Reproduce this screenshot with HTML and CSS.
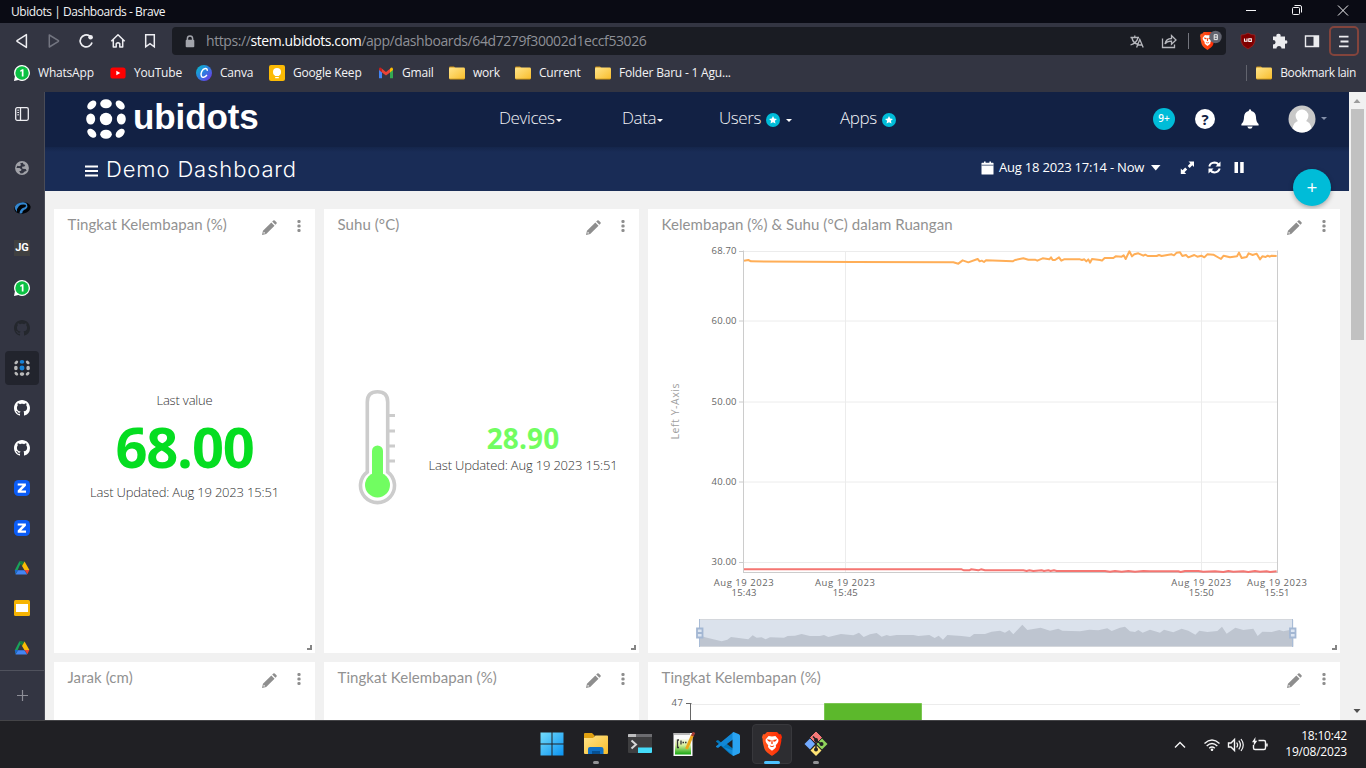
FILE: index.html
```html
<!DOCTYPE html>
<html lang="id">
<head>
<meta charset="utf-8">
<title>Ubidots | Dashboards</title>
<link rel="stylesheet" href="styles.css">
</head>
<body>
<svg class="defs" width="0" height="0">
  <defs>
    <linearGradient id="folderFill" x1="0" y1="0" x2="1" y2="1"><stop offset="0" stop-color="#ffe48a"/><stop offset="1" stop-color="#f8bd2b"/></linearGradient>
    <linearGradient id="canvaFill" x1="0" y1="0" x2="1" y2="1"><stop offset="0" stop-color="#00c4cc"/><stop offset=".5" stop-color="#2f7be0"/><stop offset="1" stop-color="#7d2ae8"/></linearGradient>
    <linearGradient id="winFill" x1="0" y1="0" x2="1" y2="1"><stop offset="0" stop-color="#74dcfb"/><stop offset="1" stop-color="#0a93f2"/></linearGradient>
    <linearGradient id="braveFill" x1="0" y1="0" x2="1" y2="0"><stop offset="0" stop-color="#ff5a1f"/><stop offset="1" stop-color="#ff2600"/></linearGradient>
    <linearGradient id="nppFill" x1="0" y1="0" x2="0" y2="1"><stop offset="0" stop-color="#f4f7ea"/><stop offset=".4" stop-color="#d8ef9c"/><stop offset="1" stop-color="#14a50f"/></linearGradient>
    <symbol id="folder" viewBox="0 0 16 14"><path d="M0 2Q0 .6 1.2 .6H5L6.6 2.2H0Z" fill="#c98e14"/><path d="M0 2.6Q0 1.6 1 1.6H14.6Q16 1.6 16 3V12Q16 13.2 14.8 13.2H1.2Q0 13.2 0 12Z" fill="url(#folderFill)"/><path d="M0 12.3Q.1 13.4 1.2 13.4H14.8Q15.9 13.4 16 12.3Q15.6 12.8 14.8 12.8H1.2Q.4 12.8 0 12.3Z" fill="#a8780f"/></symbol>
    <symbol id="whatsapp" viewBox="0 0 16 16"><path d="M8 .1A7.9 7.9 0 1 1 4.4 15L0 16 .9 11.6A7.9 7.9 0 0 1 8 .1Z" fill="#fff"/><circle cx="8" cy="8" r="6.7" fill="#0cc143"/><path d="M8.2 4.2H9.5V11.6H7.8V6.2L6.2 6.8V5.4Z" fill="#fff"/></symbol>
    <symbol id="github" viewBox="0 0 16 16"><path d="M8 0C3.58 0 0 3.58 0 8c0 3.54 2.29 6.53 5.47 7.59.4.07.55-.17.55-.38 0-.19-.01-.82-.01-1.49-2.01.37-2.53-.49-2.69-.94-.09-.23-.48-.94-.82-1.13-.28-.15-.68-.52-.01-.53.63-.01 1.08.58 1.23.82.72 1.21 1.87.87 2.33.66.07-.52.28-.87.51-1.07-1.78-.2-3.64-.89-3.64-3.95 0-.87.31-1.59.82-2.15-.08-.2-.36-1.02.08-2.12 0 0 .67-.21 2.2.82.64-.18 1.32-.27 2-.27s1.36.09 2 .27c1.53-1.04 2.2-.82 2.2-.82.44 1.1.16 1.92.08 2.12.51.56.82 1.27.82 2.15 0 3.07-1.87 3.75-3.65 3.95.29.25.54.73.54 1.48 0 1.07-.01 1.93-.01 2.2 0 .21.15.46.55.38A8.01 8.01 0 0 0 16 8c0-4.42-3.58-8-8-8Z" fill="currentColor"/></symbol>
    <symbol id="zoomz" viewBox="0 0 16 16"><rect width="16" height="16" rx="4.6" fill="#0b5cf6"/><path d="M3.7 3.4H11.9V5.7L7.2 10.5H12V12.7H3.7V10.4L8.5 5.6H3.7Z" fill="#fff"/></symbol>
    <symbol id="drive" viewBox="0 0 16 14"><path d="M5.3 .4H8L5.4 4.9 3.6 9.2 1.5 12.8 .8 9.2Z" fill="#19a35a"/><path d="M5.3 .4H10.6L8 4.9Z" fill="#188038"/><path d="M8 4.9L10.6 .4 15.4 9H10.4Z" fill="#fbbc04"/><path d="M15.4 9L13.4 13.2 10.4 9Z" fill="#ea4335"/><path d="M1.5 13.4L3.9 9.2H10.4L13.2 13.4Z" fill="#4285f4"/><path d="M.8 9H3.9L1.6 13.2Z" fill="#1967d2"/></symbol>
    <symbol id="dots" viewBox="0 0 40 40"><ellipse cx="5.8" cy="6" rx="3.6" ry="5.3" transform="rotate(45 5.8 6)"/><ellipse cx="34.2" cy="6" rx="3.6" ry="5.3" transform="rotate(-45 34.2 6)"/><ellipse cx="5.8" cy="34.2" rx="3.6" ry="5.3" transform="rotate(-45 5.8 34.2)"/><ellipse cx="34.2" cy="34.2" rx="3.6" ry="5.3" transform="rotate(45 34.2 34.2)"/><ellipse cx="4.7" cy="20" rx="4.5" ry="5.6"/><ellipse cx="35.3" cy="20" rx="4.5" ry="5.6"/><ellipse cx="20" cy="35.3" rx="5.8" ry="4.5" /><ellipse class="dot-accent" cx="20" cy="4.7" rx="5.8" ry="4.5"/><circle class="dot-accent" cx="20" cy="20" r="6.2"/></symbol>
    <symbol id="pencil" viewBox="0 0 14 14"><path d="M0 14L.9 10.1 8.7 2.3 11.7 5.3 3.9 13.1ZM9.5 1.5L10.6 .4Q11.2 -.1 11.9 .5L13.5 2.1Q14.1 2.8 13.5 3.4L12.5 4.5Z" fill="#8e8e8e"/><path d="M1.7 10.9L3.1 12.3 1.6 12.6 1.3 12.4Z" fill="#fff"/></symbol>
    <symbol id="kebab" viewBox="0 0 4 12"><rect x=".4" y="0" width="3.2" height="3" rx="1.2"/><rect x=".4" y="4.5" width="3.2" height="3" rx="1.2"/><rect x=".4" y="9" width="3.2" height="3" rx="1.2"/></symbol>
    <symbol id="star" viewBox="0 0 14 14"><circle cx="7" cy="7" r="7" fill="#00bcd8"/><path d="M7 3L8.2 5.6 11 5.9 8.9 7.8 9.5 10.6 7 9.2 4.5 10.6 5.1 7.8 3 5.9 5.8 5.6Z" fill="#fff"/></symbol>
    <symbol id="brave" viewBox="0 0 20 24"><path d="M5 0H15L17.2 2.3 19 2.2 20 5.2 19.3 7.2C19.8 9 18 15 17.4 17 16.6 19.5 12 22.5 10 24 8 22.5 3.4 19.5 2.6 17 2 15 .2 9 .7 7.2L0 5.2 1 2.2 2.8 2.3Z" fill="url(#braveFill)"/><path d="M6.600 4Q10 4.900 13.400 4L16.400 7.600Q16.800 9.400 15.600 11L13.800 13.200 14 15 12.600 16.800 10 18.800 7.400 16.800 6 15 6.200 13.200 4.400 11Q3.200 9.400 3.600 7.600Z" fill="#fff"/><path d="M5 7.300L8.800 8 8.300 9.900 6 9ZM15 7.300L11.200 8 11.700 9.900 14 9ZM7.600 13.300L10 14.200 12.400 13.300 11.200 15H8.800ZM9.600 8H10.400L10.800 11.500 10 12.200 9.200 11.500Z" fill="#fb3b05"/></symbol>
  </defs>
</svg>

<header class="titlebar">
  <span class="window-title">Ubidots | Dashboards - Brave</span>
  <svg class="winctl" width="110" height="23" viewBox="1240 0 110 23"><g fill="none" stroke="#f4f4f6" stroke-width="1"><path d="M1246 10.5H1256"/><rect x="1292.5" y="7.5" width="7" height="7" rx="1"/><path d="M1294.5 5.5H1300Q1301.5 5.5 1301.5 7V12.5"/><path d="M1338 5.5L1348 15.5M1348 5.5L1338 15.5"/></g></svg>
</header>

<nav class="toolbar">
  <div class="tool"><svg width="16" height="16" viewBox="0 0 16 16"><path d="M12.4 1.6V14.4L3 8.4V7.6Z" fill="none" stroke="#eeeef2" stroke-width="1.5" stroke-linejoin="round"/></svg></div>
  <div class="tool"><svg width="16" height="16" viewBox="0 0 16 16"><path d="M3.3 2V14L12.5 8.3V7.7Z" fill="none" stroke="#737580" stroke-width="1.5" stroke-linejoin="round"/></svg></div>
  <div class="tool"><svg width="16" height="16" viewBox="0 0 16 16"><path d="M14 9.5A6 6 0 1 1 11.6 3L12.6 4" fill="none" stroke="#eeeef2" stroke-width="1.7"/><circle cx="12.6" cy="4.2" r="2.3" fill="#eeeef2"/></svg></div>
  <div class="tool"><svg width="16" height="16" viewBox="0 0 16 16"><path d="M1.3 8.2L8 1.8 14.7 8.2M3.3 6.5V14H6.2V10.8Q8 8.5 9.8 10.8V14H12.7V6.5" fill="none" stroke="#eeeef2" stroke-width="1.5" stroke-linejoin="round"/></svg></div>
  <div class="tool"><svg width="16" height="16" viewBox="0 0 16 16"><path d="M3.7 1.7H12.3V13.8L8 10.7 3.7 13.8Z" fill="none" stroke="#eeeef2" stroke-width="1.5"/></svg></div>
  <div class="urlbar">
    <svg class="lock" width="10" height="13" viewBox="0 0 10 13"><path d="M2.4 6V3.6Q2.4 1 5 1T7.6 3.6V6" fill="none" stroke="#a2a4ab" stroke-width="1.5"/><rect x=".7" y="4.8" width="8.6" height="7.4" rx="1" fill="#a2a4ab"/></svg>
    <span class="url">https://<b>stem.ubidots.com</b>/app/dashboards/64d7279f30002d1eccf53026</span>
    <svg class="url-actions" width="100" height="28" viewBox="1126 27 100 28">
      <g fill="none" stroke="#b6b7bd" stroke-width="1.3"><path d="M1130.5 37.5H1139M1134.8 35.5V37.5M1132 38Q1133 43 1138 44.5M1138 38Q1136.5 43 1130.5 45M1136.6 47.5L1139.8 39.5 1143.2 47.5M1137.8 45H1141.8"/><path d="M1162.5 38.5V47.5H1174.5V44.5M1165 44Q1166 38.5 1171.5 38.5V35.5L1176 40 1171.5 44.2V41.2Q1167 41 1165 44Z"/></g>
      <path d="M1188.5 33V49" stroke="#73757d" stroke-width="1"/>
      <use href="#brave" x="1200" y="32" width="15" height="18"/>
      <circle cx="1215.5" cy="37" r="6.2" fill="#62646f"/><path d="M1214.200 34.700H1217.300V39.600H1214.200ZM1214.200 37.100H1217.300" fill="none" stroke="#eee" stroke-width="1"/>
    </svg>
  </div>
  <svg class="extensions" width="84" height="32" viewBox="1240 25 84 32">
    <path d="M1248 33Q1251 35 1255 35V41Q1254.500 46 1248 49 1241.500 46 1241 41V35Q1245 35 1248 33Z" fill="#800000" stroke="#9c2a2a" stroke-width=".7"/><path d="M1244.500 38.500V41.200H1247V38.500M1248.800 38.700H1251.300V41.500H1248.800Z" stroke="#fff" stroke-width="1.1" fill="none"/>
    <path d="M1273 36.500H1276.500Q1275.700 33.800 1278.500 33.800T1280.500 36.500H1285V40.500Q1287.400 39.500 1287.400 42T1285 43.500V48.500H1281.500Q1281.500 46 1279 46T1276.500 48.500H1273V44.500Q1275.600 44.500 1275.600 42.300T1273 40Z" fill="#ececef"/>
    <path d="M1305.500 36H1318.500V46.500H1305.500Z" fill="none" stroke="#ececef" stroke-width="1.4"/><path d="M1313.500 36H1318.500V46.500H1313.500Z" fill="#ececef"/>
  </svg>
  <div class="app-menu"><svg width="12" height="13" viewBox="0 0 12 13"><path d="M1 1.700H10.500M2.500 6.500H10.500M1 11.300H10.500" stroke="#ececef" stroke-width="1.800"/></svg></div>
</nav>

<nav class="bookmarks">
  <div class="bm w96"><svg width="16" height="16"><use href="#whatsapp"/></svg><span>WhatsApp</span></div>
  <div class="bm w86"><svg width="16" height="16" viewBox="0 0 16 16"><rect x=".4" y="2.500" width="15.200" height="11" rx="2.600" fill="#f00"/><path d="M6.300 5.800L10.300 8 6.300 10.200Z" fill="#fff"/></svg><span>YouTube</span></div>
  <div class="bm w73"><svg width="16" height="16" viewBox="0 0 16 16"><circle cx="8" cy="8" r="8" fill="url(#canvaFill)"/><path d="M11.200 5.800Q11.500 3.400 9.300 3.500C6 4 4.200 8.800 5.400 11.200 6.500 13.300 9.500 12.200 10.900 9.900" fill="none" stroke="#fff" stroke-width="1.400"/></svg><span>Canva</span></div>
  <div class="bm w109"><svg width="16" height="16" viewBox="0 0 16 16"><rect width="16" height="16" rx="2" fill="#fbba05"/><circle cx="8" cy="7" r="4" fill="#fff"/><path d="M6 9H10V11H6ZM6.200 12H9.800V13.200H6.200Z" fill="#fff"/></svg><span>Google Keep</span></div>
  <div class="bm w71"><svg width="16" height="16" viewBox="0 0 16 16"><path d="M1 4V13.300H4V7Z" fill="#4285f4"/><path d="M12 7V13.300H15V4Z" fill="#34a853"/><path d="M12 4V7.500L15 5V3.500Q14 2 12.500 3Z" fill="#fbbc04"/><path d="M4 3.800L8 6.900 12 3.800V7.500L8 10.600 4 7.500Z" fill="#ea4335"/><path d="M1 3.500Q1.500 2 3.500 3L4 3.500V7.500L1 5Z" fill="#c5221f"/></svg><span>Gmail</span></div>
  <div class="bm w66"><svg width="16" height="14"><use href="#folder"/></svg><span>work</span></div>
  <div class="bm w80"><svg width="16" height="14"><use href="#folder"/></svg><span>Current</span></div>
  <div class="bm"><svg width="16" height="14"><use href="#folder"/></svg><span>Folder Baru - 1 Agu...</span></div>
  <div class="bm other"><svg width="16" height="14"><use href="#folder"/></svg><span>Bookmark lain</span></div>
</nav>

<div class="browser-body">
  <aside class="sidebar">
    <div class="side-top"><svg width="14" height="14" viewBox="0 0 14 14"><rect x=".7" y=".7" width="12.600" height="12.600" rx="1.500" fill="none" stroke="#eeeef2" stroke-width="1.300"/><path d="M5.500 1V13" stroke="#eeeef2" stroke-width="1.300"/><path d="M2.300 3.200H4M2.300 5.500H4M2.300 7.800H4" stroke="#eeeef2" stroke-width="1"/></svg></div>
    <div class="side-item"><svg width="14" height="14" viewBox="0 0 15 15"><circle cx="7.500" cy="7.500" r="7.400" fill="#a1a2a8"/><path d="M1.500 7.500L5 7.500 7 9 6.500 10.500 4.500 11 6 13.300 8.500 13.200 10 11.500 12.500 10.500 11.500 8.500 8 8.300 7.500 6.200 10 6 11 4.300 9 3.500 8.500 1.800 5.500 2.300 6.500 4.500 4.500 5.500 2.500 5Z" fill="#333542"/></svg></div>
    <div class="side-item"><svg width="17" height="14" viewBox="0 0 17 14"><ellipse cx="8.500" cy="7" rx="8.200" ry="5.600" fill="#020407" transform="rotate(-12 8.500 7)"/><path d="M9 1.200Q3 1.500 1 5.500 .3 8.500 2.800 11 2.500 7.500 5 5 7 3 11.500 3.700 13 5.500 9.500 6.800 6 8 5.500 12.300 7.500 12.800 8.300 12 8.200 9.300 12 8 14.300 5.500 13 3 11.500 1.300 9 1.200Z" fill="#3387d0"/></svg></div>
    <div class="side-item"><span class="jg">JG</span></div>
    <div class="side-item"><svg width="16" height="16"><use href="#whatsapp"/></svg></div>
    <div class="side-item gh-dark"><svg width="16" height="16"><use href="#github"/></svg></div>
    <div class="side-item"><div class="side-active"><svg class="ubi-mini" width="16" height="16"><use href="#dots"/></svg></div></div>
    <div class="side-item gh"><svg width="16" height="16"><use href="#github"/></svg></div>
    <div class="side-item gh"><svg width="16" height="16"><use href="#github"/></svg></div>
    <div class="side-item"><svg width="16" height="16"><use href="#zoomz"/></svg></div>
    <div class="side-item"><svg width="16" height="16"><use href="#zoomz"/></svg></div>
    <div class="side-item"><svg width="16" height="14"><use href="#drive"/></svg></div>
    <div class="side-item"><svg width="16" height="16" viewBox="0 0 16 16"><rect width="16" height="16" rx="1.500" fill="#f6b404"/><rect x="2" y="4" width="12" height="8" fill="#fff"/></svg></div>
    <div class="side-item"><svg width="16" height="14"><use href="#drive"/></svg></div>
    <div class="side-add"><svg width="11" height="11" viewBox="0 0 11 11"><path d="M5.500 0V11M0 5.500H11" stroke="#8d8e97" stroke-width="1.200"/></svg></div>
  </aside>

  <main class="app">
    <header class="nav">
      <div class="logo"><svg class="logo-dots" width="40" height="40"><use href="#dots"/></svg><span>ubidots</span></div>
      <div class="menu">
        <div class="mi w123"><span>Devices</span><i class="caret"></i></div>
        <div class="mi w97"><span>Data</span><i class="caret"></i></div>
        <div class="mi w121"><span>Users</span><svg class="badge" width="14" height="14"><use href="#star"/></svg><i class="caret far"></i></div>
        <div class="mi"><span>Apps</span><svg class="badge" width="14" height="14"><use href="#star"/></svg></div>
      </div>
      <div class="user">
        <span class="count">9+</span>
        <span class="help">?</span>
        <svg class="bell" width="18" height="20" viewBox="0 0 18 20"><path d="M9 .3Q10.300 .3 10.300 2 14.700 3 15 8 15 13 17.600 15V16.500H.4V15Q3 13 3 8 3.300 3 7.700 2 7.700 .3 9 .3ZM6.300 17.500H11.700Q11.200 19.700 9 19.700T6.300 17.500Z" fill="#fff"/></svg>
        <svg class="avatar" width="28" height="28" viewBox="0 0 28 28"><circle cx="14" cy="14" r="13.500" fill="#c8c8c8"/><circle cx="14" cy="11" r="6.400" fill="#fff"/><path d="M4.600 23.500Q5.500 17.200 10 16H18Q22.500 17.200 23.400 23.500 19.500 27.500 14 27.500T4.600 23.500Z" fill="#fff"/></svg>
        <i class="caret dim"></i>
      </div>
    </header>
    <div class="subnav">
      <svg class="burger" width="13" height="12" viewBox="0 0 13 12"><path d="M0 1.500H13M0 6H13M0 10.500H13" stroke="#fff" stroke-width="2"/></svg>
      <h1>Demo Dashboard</h1>
      <svg class="cal" width="13" height="14" viewBox="0 0 13 14"><path d="M.5 2Q.5 1.700 1 1.700H3V.5H4.600V1.700H8.400V.5H10V1.700H12Q12.500 1.700 12.500 2V13Q12.500 13.500 12 13.500H1Q.5 13.500 .5 13Z" fill="#fff"/><path d="M.5 4.200H12.500" stroke="#192c56" stroke-width=".7"/></svg>
      <span class="range">Aug 18 2023 17:14 - Now</span>
      <svg class="subicons" width="96" height="16" viewBox="1150 160 96 16"><path d="M1151 165H1160.500L1155.750 170.500Z" fill="#fff"/><path d="M1188.500 161.500H1194V167L1192.300 165.300 1189.700 167.900 1187.700 165.900 1190.300 163.200ZM1180.800 174V168.500L1182.500 170.200 1185.200 167.500 1187.200 169.500 1184.500 172.300 1186.200 174Z" fill="#fff"/><path d="M1209.300 166.500Q1210.300 162.800 1214.500 162.600 1217 162.700 1218.500 164.500M1219.700 168.500Q1218.500 172.300 1214.500 172.400 1212 172.300 1210.500 170.500" fill="none" stroke="#fff" stroke-width="2"/><path d="M1220.500 161.500V166.500H1215.500ZM1208.500 173.500V168.500H1213.500Z" fill="#fff"/><path d="M1234.500 162H1238V173H1234.500ZM1240.200 162H1243.700V173H1240.200Z" fill="#fff"/></svg>
    </div>
    <button class="fab">+</button>

    <div class="widgets">
      <section class="card">
        <div class="card-head"><h2>Tingkat Kelembapan (%)</h2><svg class="pencil" width="15" height="15"><use href="#pencil"/></svg><svg class="kebab" width="4" height="12"><use href="#kebab"/></svg></div>
        <div class="metric"><p>Last value</p><strong>68.00</strong><p>Last Updated: Aug 19 2023 15:51</p></div>
        <i class="grip"></i>
      </section>
      <section class="card">
        <div class="card-head"><h2>Suhu (°C)</h2><svg class="pencil" width="15" height="15"><use href="#pencil"/></svg><svg class="kebab" width="4" height="12"><use href="#kebab"/></svg></div>
        <div class="thermo">
          <svg width="40" height="116" viewBox="357 389 40 116"><path d="M367.300 472V402Q367.300 391.800 377.500 391.800T387.700 402V472A17 17 0 1 1 367.300 472Z" fill="#fff" stroke="#ccc" stroke-width="3.600"/><path d="M389 415.500H395M389 431H395M389 446H395M389 461H395" stroke="#ccc" stroke-width="3"/><path d="M377.500 451V480" stroke="#71fd61" stroke-width="11" stroke-linecap="round"/><circle cx="377.500" cy="485" r="12.500" fill="#71fd61"/></svg>
          <div class="thermo-text"><strong>28.90</strong><p>Last Updated: Aug 19 2023 15:51</p></div>
        </div>
        <i class="grip"></i>
      </section>
      <section class="card">
        <div class="card-head"><h2>Kelembapan (%) &amp; Suhu (°C) dalam Ruangan</h2><svg class="pencil" width="15" height="15"><use href="#pencil"/></svg><svg class="kebab" width="4" height="12"><use href="#kebab"/></svg></div>
        <svg class="chart" width="692" height="408" viewBox="648 245 692 408">
          <g stroke="#ececec" stroke-width="1" fill="none"><path d="M744 251.500H1277M744 321H1277M744 402H1277M744 482H1277M744 562.500H1277M845.500 251V572M1201.500 251V572"/></g>
          <g stroke="#ccc" fill="none"><path d="M743.500 250.500V572.500M739 251.500H744M739 321H744M739 402H744M739 482H744M739 562.500H744M743 572.500H1278M1277.500 250.500V573"/></g>
          <g class="axis" text-anchor="end"><text x="736.500" y="254" textLength="25">68.70</text><text x="736.500" y="324" textLength="25">60.00</text><text x="736.500" y="404.500" textLength="25">50.00</text><text x="736.500" y="485" textLength="25">40.00</text><text x="736.500" y="565" textLength="25">30.00</text></g>
          <g class="axis" text-anchor="middle"><text x="743.700" y="586" textLength="60">Aug 19 2023</text><text x="744" y="596" textLength="25">15:43</text><text x="845" y="586" textLength="60">Aug 19 2023</text><text x="845.200" y="596" textLength="25">15:45</text><text x="1201.300" y="586" textLength="60">Aug 19 2023</text><text x="1201.300" y="596" textLength="25">15:50</text><text x="1277" y="586" textLength="60">Aug 19 2023</text><text x="1277" y="596" textLength="25">15:51</text></g>
          <text class="ylabel" transform="translate(678.500 411.500) rotate(-90)" text-anchor="middle" textLength="56">Left Y-Axis</text>
          <g fill="none" stroke-linejoin="round" stroke-width="6">
            <path stroke="#ffae57" transform="translate(640 200) scale(.33333)" d="M312 182 325 180 333 184 640 186 940 187 955 191 968 181 985 187 1013 177 1019 184 1025 182 1032 186 1038 181 1118 184 1125 180 1150 175 1165 179 1185 179 1192 182 1208 175 1228 178 1233 172 1238 180 1245 180 1257 172 1264 182 1272 178 1320 178 1326 180 1333 178 1339 184 1345 178 1350 188 1356 177 1380 180 1386 182 1394 174 1420 174 1427 169 1445 170 1451 166 1457 177 1468 154 1476 169 1483 163 1495 160 1510 167 1516 164 1523 168 1550 168 1557 165 1565 168 1595 163 1602 166 1610 158 1620 157 1627 168 1638 165 1645 172 1663 165 1672 170 1684 167 1693 172 1702 163 1720 164 1743 177 1751 167 1770 172 1791 169 1797 158 1805 174 1820 171 1826 160 1838 165 1850 161 1860 178 1867 169 1877 171 1883 167 1889 170 1895 167 1910 168"/>
            <path stroke="#f57672" transform="translate(640 540) scale(.33333)" d="M312 88H965L972 91H988L993 88 1015 91 1023 88 1035 91H1150L1160 93 1168 91 1180 93 1205 91 1212 93 1225 91 1232 93 1242 91 1250 93H1395L1410 95 1425 93 1445 95 1465 93 1485 95 1510 93 1530 94H1615L1622 96 1635 93H1675L1690 95 1725 94 1750 96 1765 93 1780 95 1810 94 1825 96 1845 93 1860 95 1880 94 1890 96 1910 94"/>
          </g>
          <path d="M699 620H1293.300V646.500H699Z" fill="#dbe2ec"/>
          <path transform="translate(640 540) scale(.33333)" fill="#bec5d0" d="M178 285 195 292 245 304 262 299 273 291 325 298 338 286 350 293 365 292 377 298 390 292 432 293 443 288 465 287 485 282 510 288 540 288 552 285 565 291 603 282 640 286 657 278 671 291 690 283 710 279 725 290 740 285 750 288 770 285 820 285 835 288 868 285 884 294 896 287 909 299 922 285 965 288 990 291 1002 282 1035 282 1055 275 1080 272 1095 278 1108 270 1120 283 1147 254 1162 270 1202 263 1230 272 1255 266 1267 272 1320 274 1348 269 1375 271 1402 265 1415 273 1440 263 1455 260 1470 274 1485 276 1495 270 1508 278 1530 269 1560 278 1572 269 1600 277 1625 266 1645 272 1666 284 1678 272 1702 276 1732 273 1746 260 1760 281 1786 263 1810 270 1840 266 1853 288 1867 275 1895 276 1918 270 1930 274 1960 268V320H178Z"/>
          <path d="M699 619.500H1293M699 646.500H1293" stroke="#d4d7dc"/>
          <path d="M699.500 619V647M1292.500 619V647" stroke="#a9bcd6"/>
          <g fill="#dce5f1" stroke="#a3b7d3" stroke-width="1.800"><path d="M697 628.500H702.500V637.500H697ZM697 633H702.500M1290 628.500H1295.500V637.500H1290ZM1290 633H1295.500"/></g>
        </svg>
        <i class="grip"></i>
      </section>
      <section class="card">
        <div class="card-head"><h2>Jarak (cm)</h2><svg class="pencil" width="15" height="15"><use href="#pencil"/></svg><svg class="kebab" width="4" height="12"><use href="#kebab"/></svg></div>
      </section>
      <section class="card">
        <div class="card-head"><h2>Tingkat Kelembapan (%)</h2><svg class="pencil" width="15" height="15"><use href="#pencil"/></svg><svg class="kebab" width="4" height="12"><use href="#kebab"/></svg></div>
      </section>
      <section class="card">
        <div class="card-head"><h2>Tingkat Kelembapan (%)</h2><svg class="pencil" width="15" height="15"><use href="#pencil"/></svg><svg class="kebab" width="4" height="12"><use href="#kebab"/></svg></div>
        <svg class="chart" width="692" height="30" viewBox="648 698 692 30"><path d="M691 704.500H1300" stroke="#ececec"/><path d="M686 703.500H691.500M690.500 703V728" stroke="#666" fill="none"/><path d="M824.500 703.500H921.500V728H824.500Z" fill="#5cb82c" stroke="#7cc653"/><text class="axis" x="671.500" y="706" textLength="11.500">47</text></svg>
      </section>
    </div>
  </main>
  <div class="scrollbar"><svg width="17" height="17" viewBox="0 0 17 17"><path d="M4.500 11L8 7 11.500 11Z" fill="#9c9c9c"/></svg><div class="thumb"></div><svg width="17" height="17" viewBox="0 0 17 17"><path d="M4.500 6L8 10 11.500 6Z" fill="#505050"/></svg></div>
</div>

<footer class="taskbar">
  <div class="tasks">
    <div class="task"><svg width="24" height="24" viewBox="0 0 24 24"><path d="M.5 .5H11.500V11.500H.5ZM12.500 .5H23.500V11.500H12.500ZM.5 12.500H11.500V23.500H.5ZM12.500 12.500H23.500V23.500H12.500Z" fill="url(#winFill)"/></svg></div>
    <div class="task"><svg width="24" height="24" viewBox="0 0 24 24"><path d="M0 2Q0 1 1 1H8L10.500 3.500V8H0Z" fill="#e0a010"/><path d="M0 6H9L11.500 3.500H23Q24 3.500 24 4.500V21Q24 22 23 22H1Q0 22 0 21Z" fill="url(#folderFill)"/><path d="M4 22V17Q4 15 6 15H17Q19.500 15 19.500 17V22Z" fill="#0f70c6"/><path d="M8 22V19H16V22Z" fill="#075092"/></svg><i class="mark"></i></div>
    <div class="task"><svg width="24" height="20" viewBox="0 0 24 20"><rect width="24" height="19" rx="1" fill="#3e3e40"/><path d="M0 0H24V3H0Z" fill="#6c6c70"/><path d="M0 1Q0 0 1 0H8V3H0Z" fill="#bdbdbf"/><path d="M10 13.500H24V18Q24 19 23 19H10Z" fill="#45dcfa"/><path d="M3.500 6.500L8 10.500 3.500 14.500" fill="none" stroke="#d8d8d8" stroke-width="2"/></svg></div>
    <div class="task"><svg width="24" height="24" viewBox="0 0 24 24"><path d="M1.500 1H20.500V24H1.500Z" fill="#fafafa"/><path d="M3 7H19V22.500H3Z" fill="url(#nppFill)"/><path d="M2.500 2H18" stroke="#777" stroke-width="2" stroke-dasharray="1 1"/><path d="M5.500 8H7M5.500 7.500V15.500H7M9 8.500V12.500M10.500 10.500H12M13 10.500H14.500" fill="none" stroke="#333" stroke-width="1.300"/><path d="M20.500 3L14.500 17" stroke="#eba71b" stroke-width="3"/><path d="M22 .3L20.300 4" stroke="#a33b35" stroke-width="2.800"/></svg></div>
    <div class="task"><svg width="24" height="24" viewBox="0 0 24 24"><path d="M17.500 .3L5.500 10.700 2 8 0 9V9.600L13.500 21.500 17.500 24V17L7 9 17.500 5Z" fill="#0078bd"/><path d="M17.500 24L5.500 13.300 2 16 0 15V14.300L17.500 0V7L7 15 17.500 18.500Z" fill="#1288d6"/><path d="M17.500 0L23 2.300Q24 3 24 4V20Q24 21 23 21.500L17.500 24 16.500 23V1Z" fill="#29a3f1"/></svg></div>
    <div class="task"><div class="task-on"><svg width="20" height="24"><use href="#brave"/></svg></div><i class="mark blue"></i></div>
    <div class="task"><svg width="24" height="24" viewBox="0 0 24 24"><path d="M12 0L17.500 5.500 12 11 6.500 5.500Z" fill="#f57878" stroke="#f57878" stroke-width="1"/><path d="M6 6.500L11 12 6 17.500 .5 12Z" fill="#72aaff"/><path d="M18 6.500L23.500 12 18 17.500 12.500 12Z" fill="#8fd45c"/><path d="M12 13L17.500 18.500 12 24 6.500 18.500Z" fill="#ffe374"/><path d="M9 4.500L12 7.500V16M12 8L17 12" fill="none" stroke="#202023" stroke-width="1.500"/><circle cx="12" cy="17.500" r="2" fill="#202023"/><circle cx="17.500" cy="12" r="2" fill="#202023"/><circle cx="12" cy="8" r="2" fill="#202023"/></svg><i class="mark"></i></div>
  </div>
  <svg class="tray" width="100" height="20" viewBox="1172 734 100 20"><g fill="none" stroke="#f5f5f6" stroke-width="1.400"><path d="M1175 746.500L1180 741.500 1185 746.500"/><path d="M1204.500 742.500Q1212 735.500 1219.500 742.500M1206.700 745Q1212 740 1217.300 745M1209.200 747.300Q1212 744.800 1214.800 747.300"/><path d="M1228.500 742H1231L1234.500 738.500V749.500L1231 746H1228.500Z"/><path d="M1236.700 741.500Q1238.500 744 1236.700 746.500M1238.800 739.700Q1242 744 1238.800 748.300M1241 738Q1245.500 744 1241 750" stroke-width="1.200"/><path d="M1258.500 739.500H1264Q1265.500 739.500 1265.500 741V747Q1265.500 748.500 1264 748.500H1255Q1253.500 748.500 1253.500 747V744M1267 742.500V745.500" /></g><circle cx="1212" cy="748.700" r="1.300" fill="#fff"/><path d="M1255.500 736L1252 741.300H1254L1253.500 745 1257.300 739.700H1255.200Z" fill="#f5f5f6"/></svg>
  <div class="clock"><span>18:10:42</span><span>19/08/2023</span></div>
</footer>
</body>
</html>
```
FILE: styles.css
```css
* { box-sizing: border-box; }
body { margin: 0; width: 1366px; height: 768px; overflow: hidden; display: flex; flex-direction: column; background: #333542; font-family: "Open Sans", "Noto Sans", sans-serif; font-size: 12px; color: #f3f3f5; }
svg { display: block; flex: none; }
h1, h2, p { margin: 0; font-weight: 400; white-space: nowrap; }
.defs { position: absolute; }

.titlebar { height: 23px; flex: none; background: #0a0b14; display: flex; align-items: center; justify-content: space-between; padding: 0 16px 0 11px; }
.window-title { letter-spacing: -.44px; }

.toolbar { height: 36px; flex: none; display: flex; align-items: center; padding-left: 6px; }
.tool { width: 32px; display: flex; justify-content: center; }
.urlbar { margin-left: 6px; width: 1054px; height: 28px; background: #1a1c23; border-radius: 4px; display: flex; align-items: center; }
.lock { margin: 0 11px 0 13px; }
.url { font-size: 14px; color: #8e9097; letter-spacing: -.41px; width: 920px; padding-bottom: 1px; }
.url b { font-weight: 400; color: #fff; }
.extensions { margin-left: 14px; }
.app-menu { margin-left: 5px; width: 30px; height: 30px; border: 2px solid #83443c; border-radius: 5px; display: flex; align-items: center; justify-content: center; }

.bookmarks { height: 33px; flex: none; display: flex; align-items: center; padding: 0 10px 5px 14px; }
.bm { display: flex; align-items: center; gap: 8px; white-space: nowrap; letter-spacing: -.2px; height: 16px; }
.bm span { padding-bottom: 1px; }
.w96 { width: 96px; } .w86 { width: 86px; } .w73 { width: 73px; } .w109 { width: 109px; } .w71 { width: 71px; } .w66 { width: 66px; } .w80 { width: 80px; }
.other { margin-left: auto; border-left: 1px solid #62646e; padding-left: 9px; letter-spacing: -.38px; }

.browser-body { height: 628px; flex: none; display: flex; }
.sidebar { width: 45px; flex: none; border-right: 1px solid #4a4c57; display: flex; flex-direction: column; }
.side-top { height: 44px; margin-bottom: 12px; }
.side-item { height: 40px; }
.side-top, .side-item, .side-add { display: flex; align-items: center; justify-content: center; flex: none; }
.side-add { margin-top: 2px; height: 50px; border-top: 1px solid #50525d; }
.side-active { width: 34px; height: 34px; border-radius: 4px; background: #22242d; display: flex; align-items: center; justify-content: center; }
.dot-accent { fill: var(--accent); }
.ubi-mini { fill: #b9b9b9; --accent: #1683d8; }
.jg { width: 16px; height: 16px; background: #404040; color: #fff; font: 700 11px/16px "Roboto", sans-serif; text-align: center; }
.gh { color: #fff; } .gh-dark { color: #24272d; }

.app { width: 1304px; flex: none; background: #f1f1f1; position: relative; overflow: hidden; }
.nav { height: 55px; background: #122144; display: flex; align-items: center; padding-bottom: 2px; }
.logo { margin-left: 41px; width: 413px; display: flex; align-items: center; gap: 7px; font: 700 35px/40px "Liberation Sans", sans-serif; letter-spacing: -.1px; color: #fff; }
.logo span { margin-top: -3px; }
.logo-dots { fill: #fff; --accent: #fff; }
.menu { display: flex; width: 654px; padding-bottom: 2px; }
.mi { display: flex; align-items: center; font-size: 17px; font-weight: 300; letter-spacing: -.4px; height: 24px; color: #f2f4f8; }
.w123 { width: 123px; } .w97 { width: 97px; } .w121 { width: 121px; }
.caret { border: 3px solid transparent; border-top-color: #fff; border-bottom: 0; margin: 5px 0 0 1px; }
.caret.far { margin-left: 6px; }
.caret.dim { border-top-color: #8490aa; margin: 0 0 0 5px; }
.badge { margin: 4px 0 0 5px; }
.user { display: flex; align-items: center; }
.count { width: 22px; height: 22px; border-radius: 50%; background: #00bcd8; font-weight: 600; font-size: 10px; line-height: 21px; text-align: center; color: #fff; }
.help { margin-left: 20px; width: 20px; height: 20px; border-radius: 50%; background: #fff; color: #122144; font: 700 15px/20px "Open Sans", sans-serif; text-align: center; }
.bell { margin-left: 26px; }
.avatar { margin-left: 28.500px; }
.subnav { height: 44px; background: linear-gradient(#14254b, #192c56 5px); display: flex; align-items: center; }
.burger { margin: 3px 8px 0 40px; }
.subnav h1 { font: 300 22px/30px "Inter", sans-serif; letter-spacing: .88px; width: 876px; color: #fff; }
.cal { margin: -2px 5px 0 -1px; }
.range { font-size: 13px; letter-spacing: -.2px; width: 151px; margin-top: -4px; color: #fff; white-space: nowrap; }
.subicons { margin-top: -3px; }
.fab { position: absolute; left: 1248px; top: 77px; width: 38px; height: 37px; border: 0; border-radius: 50%; padding: 0; background: #00bcd8; color: #fff; font: 400 19px/35px "Open Sans", sans-serif; box-shadow: 0 2px 5px rgba(0,0,0,.3); }

.widgets { padding: 18px 9px 0; display: grid; grid-template-columns: 261px 315px 692px; grid-template-rows: 444px 80px; gap: 9px; }
.card { background: #fff; position: relative; overflow: hidden; }
.card-head { height: 36px; display: flex; align-items: center; padding: 0 14.500px 3px 13px; }
.card-head h2 { font: 400 15px/20px "Lato", sans-serif; color: #929292; flex: 1; letter-spacing: .07px; margin-top: -3px; padding-left: .5px; }
.card:nth-child(n+4) h2 { margin-top: -4px; }
.pencil { margin-top: 3px; }
.kebab { fill: #8e8e8e; margin-left: 19.500px; margin-top: 1px; }
.chart { overflow: visible; }
.grip { position: absolute; right: 3px; bottom: 3px; width: 5px; height: 5px; border-right: 2px solid #858585; border-bottom: 2px solid #858585; }
.metric { display: flex; flex-direction: column; align-items: center; padding-top: 146px; color: #4f4f4f; }
.metric p, .thermo p { font-size: 13px; line-height: 18px; font-weight: 300; letter-spacing: -.18px; color: #333; }
.metric strong { font-size: 56px; line-height: 74px; font-weight: 700; color: #05dd21; letter-spacing: -1.2px; }
.thermo { display: flex; padding: 144px 0 0 33px; }
.thermo-text { width: 257px; margin-left: 2px; padding-top: 32px; display: flex; flex-direction: column; align-items: center; padding-left: 8px; }
.thermo strong { font-size: 28px; line-height: 35px; color: #71fd61; letter-spacing: .1px; }
.axis { font-family: "Open Sans", sans-serif; font-size: 9.500px; fill: #666; }
.ylabel { font-family: "Open Sans", sans-serif; font-size: 10.500px; fill: #a0a0a0; }

.scrollbar { width: 17px; height: 628px; background: #f1f1f1; display: flex; flex-direction: column; }
.thumb { width: 13px; height: 231px; margin: 0 2px auto; background: #c1c1c1; }

.taskbar { height: 48px; flex: none; background: #202024; border-top: 1px solid #444447; display: flex; align-items: center; }
.tasks { display: flex; margin-left: 529.500px; width: 642.500px; flex: none; padding-bottom: 1px; }
.task { width: 44px; height: 46px; display: flex; align-items: center; justify-content: center; position: relative; }
.task-on { width: 40px; height: 40px; border: 1px solid #38383c; border-radius: 4px; background: #2d2d31; display: flex; align-items: center; justify-content: center; }
.mark { position: absolute; left: 19px; bottom: 3px; width: 6px; height: 3px; border-radius: 2px; background: #929295; }
.mark.blue { left: 14px; width: 16px; background: #4cc2ff; }
.clock { width: 75px; padding-bottom: 1px; display: flex; flex-direction: column; align-items: flex-end; line-height: 16px; color: #fff; letter-spacing: -.2px; font-size: 12px; }
```
